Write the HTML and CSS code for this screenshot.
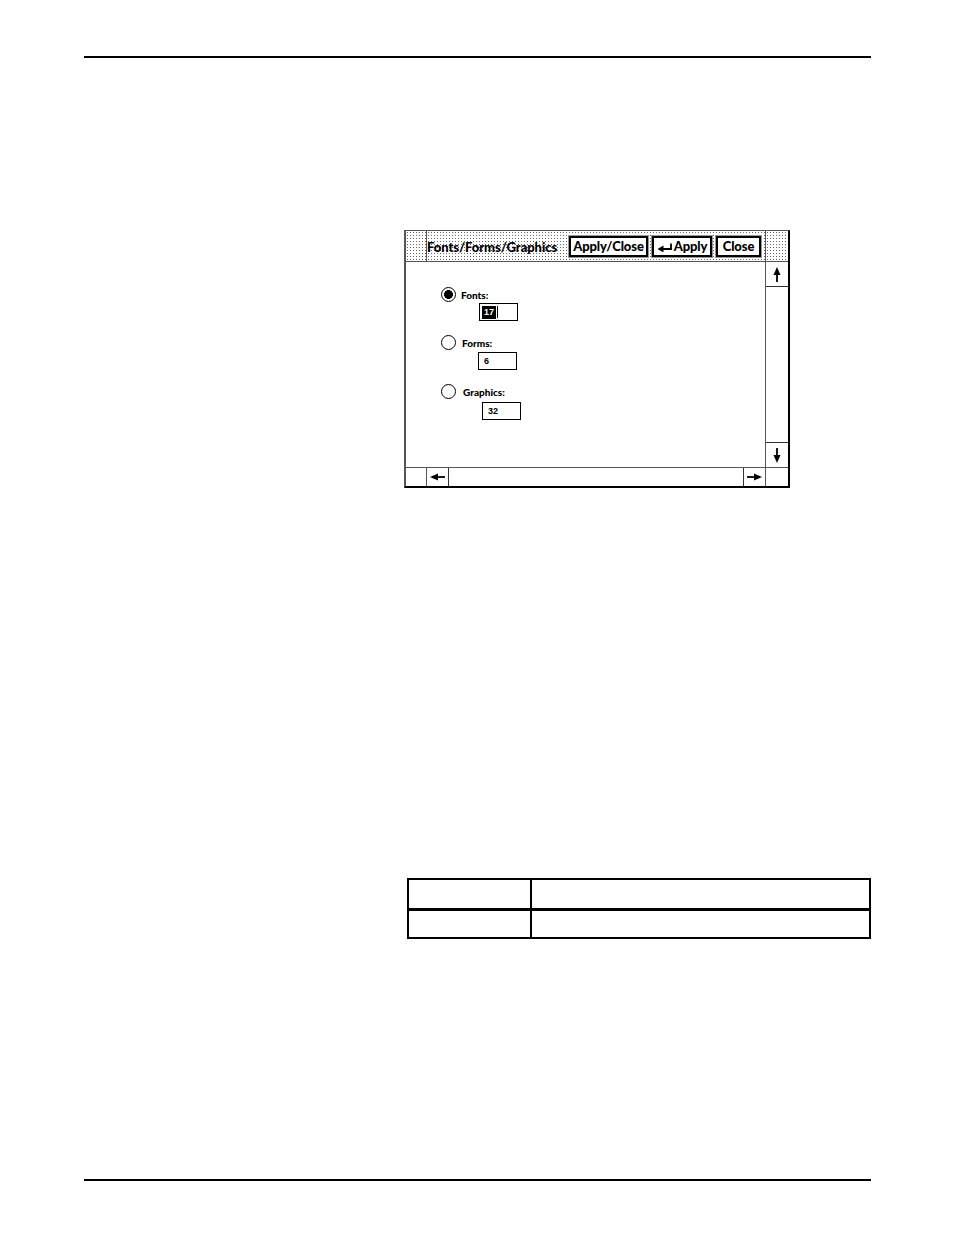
FILE: index.html
```html
<!DOCTYPE html>
<html>
<head>
<meta charset="utf-8">
<link rel="stylesheet" href="styles.css">
</head>
<body>
<div class="page">
  <div class="rule rule-top"></div>

  <div class="window">
    <div class="titlebar">
      <div class="cap cap-left"></div>
      <div class="tb-main">
        <span class="title">Fonts/Forms/Graphics</span>
        <div class="buttons">
          <span class="btn btn-applyclose">Apply/Close</span>
          <span class="btn btn-apply"><svg class="ret" width="16" height="9" viewBox="0 0 16 9"><path d="M14 0.5 V6 H5" fill="none" stroke="#000" stroke-width="1.8"/><path d="M0.5 6 L6.5 2.5 L6.5 9.5 Z" fill="#000"/></svg>Apply</span>
          <span class="btn btn-close">Close</span>
        </div>
      </div>
      <div class="cap cap-right"></div>
    </div>

    <div class="body">
      <div class="content">
        <div class="group group-fonts">
          <div class="opt"><span class="radio radio-on"></span><span class="label">Fonts:</span></div>
          <div class="field field-fonts"><span class="sel">17</span><span class="caret"></span></div>
        </div>
        <div class="group group-forms">
          <div class="opt"><span class="radio"></span><span class="label">Forms:</span></div>
          <div class="field field-forms">6</div>
        </div>
        <div class="group group-graphics">
          <div class="opt"><span class="radio"></span><span class="label">Graphics:</span></div>
          <div class="field field-graphics">32</div>
        </div>
      </div>
      <div class="vscroll">
        <div class="vbox vbox-up"><svg width="8" height="15" viewBox="0 0 8 15"><path d="M4 0 L7.5 8 H0.5 Z" fill="#000"/><path d="M4 6 V15" stroke="#000" stroke-width="1.8"/></svg></div>
        <div class="vtrack"></div>
        <div class="vbox vbox-down"><svg width="8" height="15" viewBox="0 0 8 15"><path d="M4 0 V9" stroke="#000" stroke-width="1.8"/><path d="M4 15 L7.5 7 H0.5 Z" fill="#000"/></svg></div>
      </div>
    </div>

    <div class="hscroll">
      <div class="hbox hbox-blank"></div>
      <div class="hbox hbox-left"><svg width="15" height="8" viewBox="0 0 15 8"><path d="M0 4 L8 0.5 V7.5 Z" fill="#000"/><path d="M6 4 H15" stroke="#000" stroke-width="1.8"/></svg></div>
      <div class="htrack"></div>
      <div class="hbox hbox-right"><svg width="15" height="8" viewBox="0 0 15 8"><path d="M0 4 H9" stroke="#000" stroke-width="1.8"/><path d="M15 4 L7 0.5 V7.5 Z" fill="#000"/></svg></div>
      <div class="hbox hbox-corner"></div>
    </div>
  </div>

  <table class="grid-table">
    <tr class="row-head"><td class="c1"></td><td class="c2"></td></tr>
    <tr class="row-body"><td class="c1"></td><td class="c2"></td></tr>
  </table>

  <div class="rule rule-bottom"></div>
</div>
</body>
</html>
```

FILE: styles.css
```css
html, body {
  margin: 0;
  padding: 0;
  background: #fff;
}
body {
  font-family: "Lato", "Open Sans", "Liberation Sans", sans-serif;
  color: #000;
}
.page {
  width: 954px;
  height: 1235px;
  overflow: hidden;
  padding-top: 56px;
  box-sizing: border-box;
}
.rule {
  height: 2px;
  background: #000;
  margin-left: 84px;
  width: 787px;
}
.rule-bottom {
  margin-top: 240px;
}

/* window */
.window {
  margin-top: 172px;
  margin-left: 404px;
  width: 386px;
  height: 258px;
  box-sizing: border-box;
  border-left: 2px solid #555;
  border-top: 1px solid #555;
  border-right: 2px solid #000;
  border-bottom: 2px solid #000;
  display: flex;
  flex-direction: column;
}
.titlebar {
  height: 31px;
  flex: none;
  display: flex;
  border-bottom: 1px solid #555;
  box-sizing: border-box;
  background-color: #fff;
  background-image: radial-gradient(circle, #666 0.8px, transparent 1px);
  background-size: 3px 3px;
}
.cap {
  width: 20px;
  flex: none;
}
.cap-left {
  border-right: 1px solid #555;
}
.cap-right {
  width: 22px;
  border-left: 1px solid #555;
}
.tb-main {
  flex: 1;
  display: flex;
  align-items: center;
  justify-content: space-between;
  padding: 0 4px 0 0;
}
.title {
  font-weight: 900;
  font-size: 13px;
  letter-spacing: -0.05px;
  padding-top: 1px;
}
.buttons {
  display: flex;
  gap: 4px;
  align-items: center;
}
.btn {
  display: flex;
  align-items: center;
  justify-content: center;
  height: 21px;
  box-sizing: border-box;
  border: 2px solid #000;
  outline: 1px solid #999;
  background: #fff;
  font-weight: 900;
  font-size: 13px;
  letter-spacing: -0.1px;
}
.btn-applyclose { width: 79px; }
.btn-apply { width: 60px; }
.btn-close { width: 45px; }
.ret {
  margin-right: 1px;
  margin-top: 3px;
}

/* body */
.body {
  flex: 1;
  display: flex;
  min-height: 0;
}
.content {
  flex: 1;
  padding: 25px 0 0 35px;
}
.group {
  display: flex;
  flex-direction: column;
}
.group-forms { margin-top: 14px; }
.group-graphics { margin-top: 14px; }
.opt {
  display: flex;
  align-items: center;
  height: 15px;
}
.radio {
  width: 15px;
  height: 15px;
  box-sizing: border-box;
  border: 1.5px solid #000;
  border-radius: 50%;
  flex: none;
  background: #fff;
}
.radio-on {
  background: radial-gradient(circle, #000 0 4.2px, #fff 4.6px);
}
.label {
  font-weight: 900;
  font-size: 10px;
  margin-left: 5px;
}
.group-forms .label { margin-left: 6px; }
.group-graphics .label { margin-left: 7px; }
.field {
  width: 39px;
  height: 18px;
  box-sizing: border-box;
  border: 1.5px solid #000;
  font-size: 9px;
  font-weight: 700;
  font-family: "Liberation Sans", "Lato", sans-serif;
  display: flex;
  align-items: center;
  padding-left: 5px;
}
.field-fonts { margin-left: 38px; margin-top: 1px; padding-left: 2px; }
.field-forms { margin-left: 37px; margin-top: 2px; }
.field-graphics { margin-left: 41px; margin-top: 3px; }
.sel {
  background: #000;
  color: #fff;
  padding: 1px 2px;
  line-height: 11px;
}
.caret {
  width: 1px;
  height: 12px;
  background: #000;
  margin-left: 1px;
}

/* vertical scrollbar */
.vscroll {
  width: 22px;
  flex: none;
  border-left: 1px solid #555;
  display: flex;
  flex-direction: column;
}
.vbox {
  height: 24px;
  display: flex;
  align-items: center;
  justify-content: center;
  flex: none;
}
.vbox-up { border-bottom: 1px solid #333; }
.vbox-down { border-top: 1px solid #333; }
.vtrack { flex: 1; }

/* horizontal scrollbar */
.hscroll {
  height: 18px;
  flex: none;
  display: flex;
  border-top: 1px solid #555;
}
.hbox {
  display: flex;
  align-items: center;
  justify-content: center;
  flex: none;
}
.hbox-blank { width: 20px; border-right: 1px solid #555; }
.hbox-left { width: 21px; border-right: 1px solid #333; }
.htrack { flex: 1; }
.hbox-right { width: 21px; border-left: 1px solid #333; }
.hbox-corner { width: 22px; border-left: 1px solid #555; }

/* table */
.grid-table {
  margin-top: 390px;
  margin-left: 407px;
  width: 464px;
  border-collapse: collapse;
  border: 2px solid #000;
}
.grid-table td {
  padding: 0;
}
.grid-table .c1 {
  width: 121px;
  border-right: 2px solid #000;
}
.row-head td {
  height: 28px;
  border-bottom: 3px solid #000;
}
.row-body td {
  height: 26px;
}
```
